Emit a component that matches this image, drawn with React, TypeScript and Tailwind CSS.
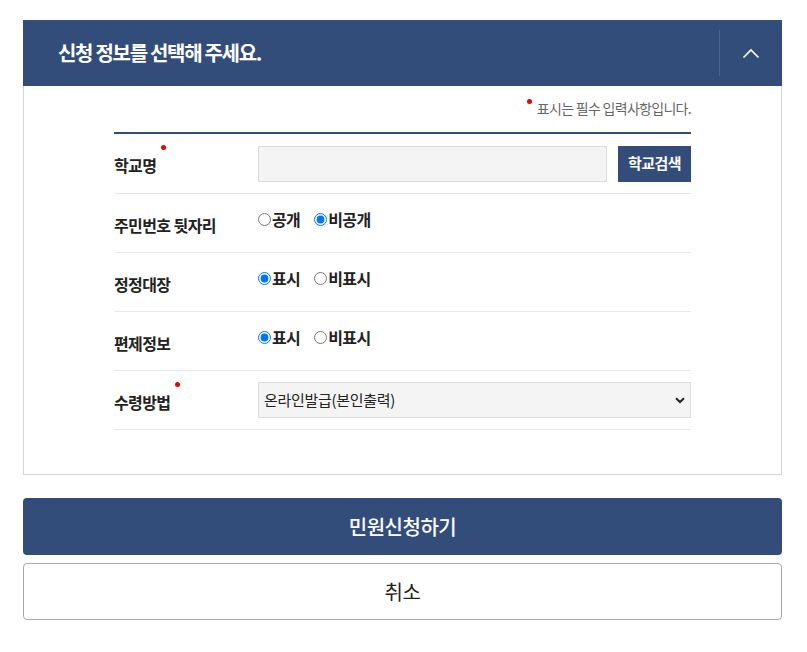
import { useState } from "react";

const font = { fontFamily: '"Noto Sans CJK KR", "Noto Sans", sans-serif' };

const RequiredDot = () => (
    <span className="absolute -right-[10px] -top-[8px] h-[5px] w-[5px] rounded-full bg-[#ee0000]" />
);

const Row = ({
    label,
    required,
    first,
    children,
}: {
    label: string;
    required?: boolean;
    first?: boolean;
    children: React.ReactNode;
}) => (
    <div
        className={
            first
                ? "box-content flex h-[59px] items-center border-b border-[#e8e8e8]"
                : "box-content flex h-[58px] items-center border-b border-[#e8e8e8]"
        }
    >
        <div className="w-[144px] shrink-0 pt-[3px]">
            <span className="relative text-[16px] font-bold tracking-[-0.6px] text-[#222]">
                {label}
                {required && <RequiredDot />}
            </span>
        </div>
        <div className="flex flex-1 items-center">{children}</div>
    </div>
);

const RadioGroup = ({
    name,
    options,
    value,
    onChange,
}: {
    name: string;
    options: string[];
    value: string;
    onChange: (v: string) => void;
}) => (
    <div className="-mt-[8px] flex items-center gap-x-[14px]">
        {options.map((opt) => (
            <label key={opt} className="flex cursor-pointer items-center">
                <input
                    type="radio"
                    name={name}
                    checked={value === opt}
                    onChange={() => onChange(opt)}
                    className="m-0 mr-[1px] h-[13px] w-[13px]"
                />
                <span className="text-[16px] font-bold tracking-[-0.6px] text-[#222]">
                    {opt}
                </span>
            </label>
        ))}
    </div>
);

const App = () => {
    const [ssn, setSsn] = useState("비공개");
    const [fix, setFix] = useState("표시");
    const [org, setOrg] = useState("표시");
    const [open, setOpen] = useState(true);

    return (
        <div className="min-h-[652px] bg-white pl-[23px] pr-[25px] pt-[20px]" style={font}>
            <div className="flex h-[66px] items-center bg-[#334d7a]">
                <h2 className="flex-1 pl-[35px] text-[20px] font-bold tracking-[-1.3px] text-white">
                    신청 정보를 선택해 주세요.
                </h2>
                <button
                    type="button"
                    onClick={() => setOpen(!open)}
                    className="flex h-[46px] w-[63px] items-center justify-center border-l border-[#4b6390]"
                >
                    <svg width="18" height="11" viewBox="0 0 18 11" fill="none">
                        <path
                            d="M1.5 9.5 L9 2 L16.5 9.5"
                            stroke="white"
                            strokeWidth="1.6"
                        />
                    </svg>
                </button>
            </div>

            {open && (
                <div className="border border-t-0 border-[#d5d5d5] px-[90px] pb-[44px] pt-[12px]">
                    <p className="text-right text-[14px] tracking-[-0.7px] text-[#666]">
                        <span className="relative">
                            <span className="absolute -left-[10px] top-[1px] h-[5px] w-[5px] rounded-full bg-[#ee0000]" />
                            표시는 필수 입력사항입니다.
                        </span>
                    </p>
                    <div className="mt-[13px] border-t-2 border-[#334d7a]">
                        <Row label="학교명" required first>
                            <input
                                type="text"
                                className="h-[36px] w-[349px] border border-[#dcdcdc] bg-[#f4f4f4] px-2 text-[15px] outline-none"
                            />
                            <button
                                type="button"
                                className="ml-auto h-[36px] w-[73px] bg-[#334d7a] text-[15px] font-bold tracking-[-0.6px] text-white"
                            >
                                학교검색
                            </button>
                        </Row>
                        <Row label="주민번호 뒷자리">
                            <RadioGroup
                                name="ssn"
                                options={["공개", "비공개"]}
                                value={ssn}
                                onChange={setSsn}
                            />
                        </Row>
                        <Row label="정정대장">
                            <RadioGroup
                                name="fix"
                                options={["표시", "비표시"]}
                                value={fix}
                                onChange={setFix}
                            />
                        </Row>
                        <Row label="편제정보">
                            <RadioGroup
                                name="org"
                                options={["표시", "비표시"]}
                                value={org}
                                onChange={setOrg}
                            />
                        </Row>
                        <Row label="수령방법" required>
                            <div className="relative w-full">
                                <select className="h-[36px] w-full appearance-none border border-[#dcdcdc] bg-[#f4f4f4] pl-[5px] text-[15px] tracking-[-0.3px] text-[#222] outline-none">
                                    <option>온라인발급(본인출력)</option>
                                    <option>우편발급</option>
                                </select>
                                <svg
                                    className="pointer-events-none absolute right-[6px] top-[15px]"
                                    width="10"
                                    height="7"
                                    viewBox="0 0 10 7"
                                    fill="none"
                                >
                                    <path
                                        d="M1 1.2 L5 5 L9 1.2"
                                        stroke="#222"
                                        strokeWidth="2"
                                    />
                                </svg>
                            </div>
                        </Row>
                    </div>
                </div>
            )}

            <button
                type="button"
                className="mt-[23px] flex h-[57px] w-full items-center justify-center rounded-[4px] bg-[#334d7a] text-[20px] font-medium tracking-[-0.5px] text-white"
            >
                민원신청하기
            </button>
            <button
                type="button"
                className="mt-[8px] flex h-[57px] w-full items-center justify-center rounded-[4px] border border-[#aaaaaa] bg-white text-[20px] tracking-[-0.5px] text-[#222]"
            >
                취소
            </button>
        </div>
    );
};

export default App;
